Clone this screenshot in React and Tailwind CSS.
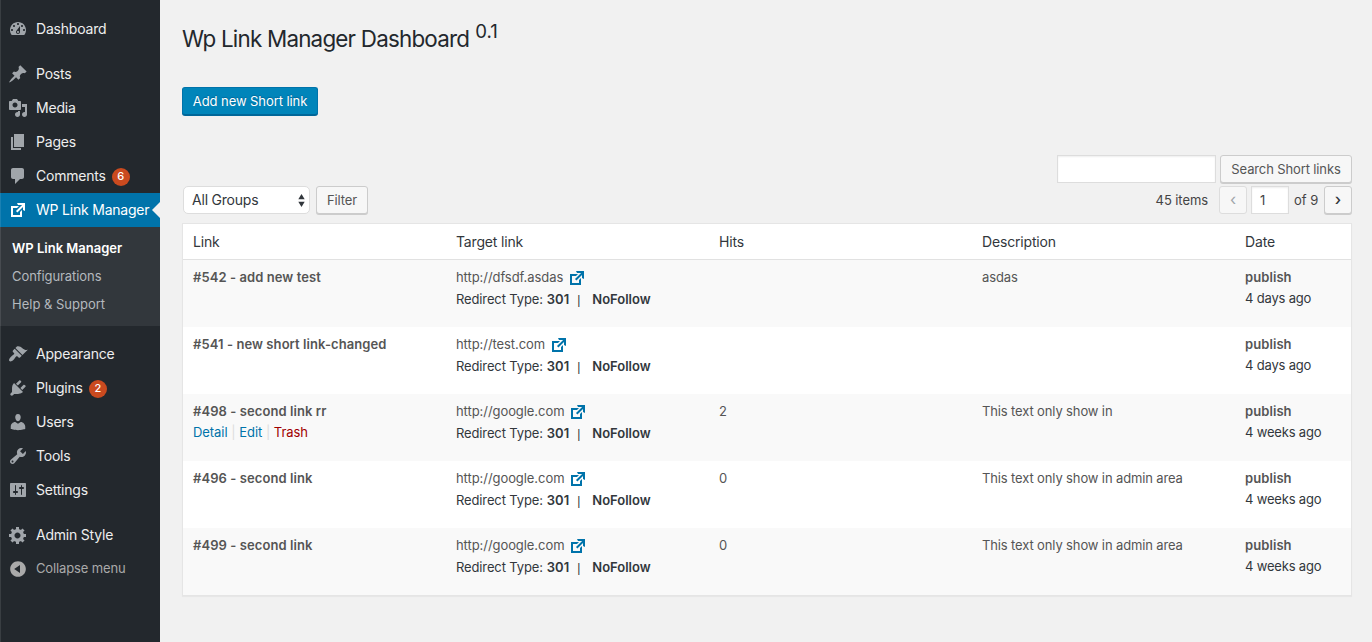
import React from "react";

const ICONS = {
  dashboard:
    "M3.76 16h12.48c1.1-1.37 1.76-3.11 1.76-5 0-4.42-3.58-8-8-8s-8 3.58-8 8c0 1.89.66 3.63 1.76 5zM10 4c.55 0 1 .45 1 1s-.45 1-1 1-1-.45-1-1 .45-1 1-1zM6 6c.55 0 1 .45 1 1s-.45 1-1 1-1-.45-1-1 .45-1 1-1zm8 0c.55 0 1 .45 1 1s-.45 1-1 1-1-.45-1-1 .45-1 1-1zm-5.37 5.55L12 7v6c0 1.1-.9 2-2 2s-2-.9-2-2c0-.57.24-1.08.63-1.45zM4 10c.55 0 1 .45 1 1s-.45 1-1 1-1-.45-1-1 .45-1 1-1zm12 0c.55 0 1 .45 1 1s-.45 1-1 1-1-.45-1-1 .45-1 1-1zm-5 3c0-.55-.45-1-1-1s-1 .45-1 1 .45 1 1 1 1-.45 1-1z",
  post: "M10.44 3.02l1.82-1.82 6.36 6.35-1.83 1.82c-1.05-.68-2.48-.57-3.41.36l-.75.75c-.92.93-1.04 2.35-.35 3.41l-1.83 1.82-2.41-2.41-2.8 2.79c-.42.42-3.38 2.71-3.8 2.29s1.86-3.39 2.28-3.81l2.79-2.79L4.1 9.36l1.83-1.82c1.05.69 2.48.57 3.4-.36l.75-.75c.93-.92 1.05-2.35.36-3.41z",
  media:
    "M13 11V4c0-.55-.45-1-1-1h-1.67L9 1H5L3.67 3H2c-.55 0-1 .45-1 1v7c0 .55.45 1 1 1h10c.55 0 1-.45 1-1zM7 4.5c1.38 0 2.5 1.12 2.5 2.5S8.38 9.5 7 9.5 4.5 8.38 4.5 7 5.62 4.5 7 4.5zM14 6h5v10.5c0 1.38-1.12 2.5-2.5 2.5S14 17.88 14 16.5s1.12-2.5 2.5-2.5c.17 0 .34.02.5.05V9h-3V6zm-4 8.05V13h2v3.5c0 1.38-1.12 2.5-2.5 2.5S7 17.88 7 16.5 8.12 14 9.5 14c.17 0 .34.02.5.05z",
  page: "M6 15V2h10v13H6zm-1 1h8v2H3V5h2v11z",
  comments:
    "M5 2h9c1.1 0 2 .9 2 2v7c0 1.1-.9 2-2 2h-2l-5 5v-5H5c-1.1 0-2-.9-2-2V4c0-1.1.9-2 2-2z",
  external:
    "M9 3h8v8l-2-1V6.92l-5.6 5.59-1.41-1.41L14.08 5H10zm3 12v-3l2-2v7H3V6h8L9 8H5v7h7z",
  appearance:
    "M14.48 11.06L7.41 3.99l1.5-1.5c.5-.56 2.3-.47 3.51.32 1.21.8 1.43 1.28 2.91 2.1 1.18.64 2.45 1.26 4.45.85zm-.71.71L6.7 4.7 4.93 6.47c-.39.39-.39 1.02 0 1.41l1.06 1.06c.39.39.39 1.03 0 1.42-.6.6-1.43 1.11-2.21 1.69-.35.26-.7.53-1.01.84C1.43 14.23.4 16.08 1.4 17.07c.99 1 2.84-.03 4.18-1.36.31-.31.58-.66.85-1.02.57-.78 1.08-1.61 1.69-2.21.39-.39 1.02-.39 1.41 0l1.06 1.06c.39.39 1.02.39 1.41 0z",
  plugins:
    "M13.11 4.36L9.87 7.6 8 5.73l3.24-3.24c.35-.34 1.05-.2 1.56.32.52.51.66 1.21.31 1.55zm-8 1.77l.91-1.12 9.01 9.01-1.19.84c-.71.71-2.63 1.16-3.82 1.16H6.14L4.9 17.26c-.59.59-1.54.59-2.12 0-.59-.58-.59-1.53 0-2.12l1.24-1.24v-3.88c0-1.13.4-3.19 1.09-3.89zm7.26 3.97l3.24-3.24c.34-.35 1.04-.21 1.55.31.52.51.66 1.21.31 1.55l-3.24 3.25z",
  users:
    "M10 9.25c-2.27 0-2.73-3.44-2.73-3.44C7 4.02 7.82 2 9.97 2c2.16 0 2.98 2.02 2.71 3.81 0 0-.41 3.44-2.68 3.44zm0 2.57L12.72 10c2.39 0 4.52 2.33 4.52 4.53v2.49s-3.65 1.13-7.24 1.13c-3.65 0-7.24-1.13-7.24-1.13v-2.49c0-2.25 1.94-4.48 4.47-4.48z",
  tools:
    "M16.68 9.77c-1.34 1.34-3.3 1.67-4.95.99l-5.41 6.52c-.99.99-2.59.99-3.58 0s-.99-2.59 0-3.57l6.52-5.42c-.68-1.65-.35-3.61.99-4.95 1.28-1.28 3.12-1.62 4.72-1.06l-2.89 2.89 2.82 2.82 2.86-2.87c.53 1.58.18 3.39-1.08 4.65zM3.81 16.21c.4.39 1.04.39 1.43 0 .4-.4.4-1.04 0-1.43-.39-.4-1.03-.4-1.43 0-.39.39-.39 1.03 0 1.43z",
  settings:
    "M18 16V4c0-.55-.45-1-1-1H3c-.55 0-1 .45-1 1v12c0 .55.45 1 1 1h14c.55 0 1-.45 1-1zM8 11h1c.55 0 1 .45 1 1s-.45 1-1 1H8v1.5c0 .28-.22.5-.5.5s-.5-.22-.5-.5V13H6c-.55 0-1-.45-1-1s.45-1 1-1h1V5.5c0-.28.22-.5.5-.5s.5.22.5.5V11zm5-2h-1c-.55 0-1-.45-1-1s.45-1 1-1h1V5.5c0-.28.22-.5.5-.5s.5.22.5.5V7h1c.55 0 1 .45 1 1s-.45 1-1 1h-1v5.5c0 .28-.22.5-.5.5s-.5-.22-.5-.5V9z",
  generic:
    "M18 12h-2.18c-.17.7-.44 1.35-.81 1.93l1.54 1.54-2.1 2.1-1.54-1.54c-.58.36-1.23.63-1.91.79V19H8v-2.18c-.68-.16-1.33-.43-1.91-.79l-1.54 1.54-2.12-2.12 1.54-1.54c-.36-.58-.63-1.23-.79-1.91H1V9.03h2.17c.16-.7.44-1.35.8-1.94L2.43 5.55l2.1-2.1 1.54 1.54c.58-.37 1.24-.64 1.93-.81V2h3v2.18c.68.16 1.33.43 1.91.79l1.54-1.54 2.12 2.12-1.54 1.54c.36.59.64 1.24.8 1.94H18V12zm-8.5 1.5c1.66 0 3-1.34 3-3s-1.34-3-3-3-3 1.34-3 3 1.34 3 3 3z",
  collapse:
    "M10 2.16c4.33 0 7.84 3.51 7.84 7.84s-3.51 7.84-7.84 7.84S2.16 14.33 2.16 10 5.71 2.16 10 2.16zm2 11.72V6.12L6.18 9.97z",
};

function Icon({ name, className = "" }) {
  return (
    <svg viewBox="0 0 20 20" fill="currentColor" fillRule="evenodd" className={`size-5 shrink-0 ${className}`}>
      <path d={ICONS[name]} />
    </svg>
  );
}

function MenuItem({ icon, label, badge, active }) {
  return (
    <li className={`relative flex h-[34px] items-center pl-2 text-sm ${active ? "bg-[#0073aa] text-white" : "text-[#eeeeee]"}`}>
      <Icon name={icon} className={active ? "text-white" : "text-[#a0a5aa]"} />
      <span className="ml-2 whitespace-nowrap tracking-[-0.015em]">{label}</span>
      {badge && (
        <span className="mt-0.5 ml-1.5 flex size-[18px] items-center justify-center rounded-full bg-[#ca4a1f] text-[11px] font-medium text-white">
          {badge}
        </span>
      )}
      {active && (
        <span className="absolute top-[9px] right-0 border-y-8 border-r-8 border-y-transparent border-r-[#f1f1f1]" />
      )}
    </li>
  );
}

function Sidebar() {
  return (
    <nav className="relative w-40 shrink-0 bg-[#23282d] pt-3">
      <ul>
        <MenuItem icon="dashboard" label="Dashboard" />
      </ul>
      <ul className="mt-[11px]">
        <MenuItem icon="post" label="Posts" />
        <MenuItem icon="media" label="Media" />
        <MenuItem icon="page" label="Pages" />
        <MenuItem icon="comments" label="Comments" badge="6" />
        <MenuItem icon="external" label="WP Link Manager" active />
      </ul>
      <ul className="h-[99px] bg-[#32373c] pt-[7px] pl-3 text-[13px] leading-7 tracking-[-0.01em] text-[#b4b9be]">
        <li className="font-semibold tracking-normal text-white">WP Link Manager</li>
        <li className="tracking-[-0.006em]">Configurations</li>
        <li className="tracking-normal">Help &amp; Support</li>
      </ul>
      <ul className="mt-[11px]">
        <MenuItem icon="appearance" label="Appearance" />
        <MenuItem icon="plugins" label="Plugins" badge="2" />
        <MenuItem icon="users" label="Users" />
        <MenuItem icon="tools" label="Tools" />
        <MenuItem icon="settings" label="Settings" />
      </ul>
      <ul className="mt-[11px]">
        <MenuItem icon="generic" label="Admin Style" />
        <li className="flex h-[34px] items-center pl-2 text-[13px] text-[#aaaaaa]">
          <Icon name="collapse" />
          <span className="ml-2 tracking-[-0.01em]">Collapse menu</span>
        </li>
      </ul>
      <span className="absolute inset-y-0 left-0 w-px bg-white/10" />
    </nav>
  );
}

const GREY_BUTTON =
  "flex h-7 items-center justify-center rounded-[3px] border border-[#cccccc] bg-[#f7f7f7] text-[13px] tracking-[-0.01em] text-[#555555] shadow-[0_1px_0_#cccccc]";

const ROWS = [
  { title: "#542 - add new test", url: "http://dfsdf.asdas", hits: "", desc: "asdas", date: "4 days ago" },
  { title: "#541 - new short link-changed", url: "http://test.com", hits: "", desc: "", date: "4 days ago" },
  { title: "#498 - second link rr", url: "http://google.com", hits: "2", desc: "This text only show in", date: "4 weeks ago", actions: true },
  { title: "#496 - second link", url: "http://google.com", hits: "0", desc: "This text only show in admin area", date: "4 weeks ago" },
  { title: "#499 - second link", url: "http://google.com", hits: "0", desc: "This text only show in admin area", date: "4 weeks ago" },
];

const GRID = "grid grid-cols-[263px_263px_263px_263px_1fr] *:pl-2.5";

function Row({ row }) {
  return (
    <div className={`${GRID} h-[67px] pt-2 text-[13px] leading-[19.5px] tracking-[-0.01em] text-[#555555] odd:bg-[#f9f9f9]`}>
      <div>
        <div className="font-semibold tracking-[0.006em]">{row.title}</div>
        {row.actions && (
          <div className="mt-[1.5px] flex tracking-[-0.004em] text-[#dddddd]">
            <span className="text-[#0073aa]">Detail</span>
            <span className="px-[3.7px]">|</span>
            <span className="text-[#0073aa]">Edit</span>
            <span className="px-[3.7px]">|</span>
            <span className="text-[#a00000]">Trash</span>
          </div>
        )}
      </div>
      <div>
        <div className="flex h-[21px] items-start tracking-[-0.005em]">
          {row.url}
          <Icon name="external" className="ml-[3.5px] text-[#0073aa]" />
        </div>
        <div className="flex items-baseline leading-[21px] text-[#32373c]">
          <span>Redirect Type:</span>
          <b className="ml-1 font-semibold tracking-normal">301</b>
          <span className="ml-2 font-['Liberation_Sans'] text-xs leading-none tracking-normal">|</span>
          <b className="ml-3 font-semibold tracking-normal">NoFollow</b>
        </div>
      </div>
      <div>{row.hits}</div>
      <div>{row.desc}</div>
      <div>
        <div className="font-semibold tracking-[0.006em]">publish</div>
        <div className="mt-[1.5px] tracking-[-0.014em] text-[#32373c]">{row.date}</div>
      </div>
    </div>
  );
}

export default function App() {
  return (
    <div className="flex h-[642px] w-[1372px] overflow-hidden bg-[#f1f1f1] font-['Inter','Liberation_Sans',sans-serif] text-[#444444]">
      <Sidebar />
      <main className="flex flex-1 flex-col pr-5 pl-[22px]">
        <h1 className="mt-[22px] flex h-[34px] items-center text-[22.4px] tracking-[-0.035em] text-[#23282d]">
          Wp Link Manager Dashboard
          <span className="mb-[15px] ml-1.5 text-[18.6px] tracking-normal">0.1</span>
        </h1>
        <button className="mt-[31px] flex h-7 w-[136px] items-center justify-center rounded-[3px] border border-[#0073aa] border-b-[#006799] bg-[#0085ba] pt-0.5 text-[13px] tracking-[-0.006em] whitespace-nowrap text-white shadow-[0_1px_0_#006799] text-shadow-[0_-1px_1px_#006799]">
          Add new Short link
        </button>
        <div className="mt-10 flex justify-end gap-1">
          <div className="h-7 w-[159px] border border-[#dddddd] bg-white shadow-[inset_0_1px_2px_rgba(0,0,0,0.07)]" />
          <button className={`${GREY_BUTTON} w-[132px] pt-0.5`}>Search Short links</button>
        </div>
        <div className="mt-[3px] flex h-7 items-center">
          <div className="ml-px flex h-7 w-[127px] items-center justify-between rounded-[5px] border border-[#dddddd] bg-white pr-1 pl-2 text-sm tracking-[-0.015em] text-[#32373c]">
            All Groups
            <svg viewBox="0 0 7 13" className="h-[13px] w-[7px]" fill="#32373c">
              <path d="M3.5 0L6.7 5.3H.3zM3.5 13L.3 7.7h6.4z" />
            </svg>
          </div>
          <button className={`${GREY_BUTTON} ml-1.5 w-[52px] pt-0.5`}>Filter</button>
          <span className="mr-[11px] ml-auto pt-0.5 text-[13px] tracking-[-0.006em]">45 items</span>
          <span className="flex h-7 w-7 items-center justify-center rounded-[3px] border border-[#dddddd] bg-[#f7f7f7] pb-0.5 text-base text-[#a0a5aa]">
            ‹
          </span>
          <span className="ml-1 flex h-7 w-[38px] items-center border border-[#dddddd] bg-white pt-0.5 pl-2 text-[13px] shadow-[inset_0_1px_2px_rgba(0,0,0,0.07)]">
            1
          </span>
          <span className="w-[35px] pt-0.5 pl-[5px] text-[13px] whitespace-nowrap">of 9</span>
          <span className={`${GREY_BUTTON} w-7 pb-0.5`}>
            <span className="text-base font-medium text-[#32373c]">›</span>
          </span>
        </div>
        <div className="mt-[9px] h-[373px] border border-[#e5e5e5] bg-white shadow-[0_1px_1px_rgba(0,0,0,0.04)]">
          <div className={`${GRID} h-9 items-center border-b border-[#e1e1e1] text-sm tracking-[-0.012em] text-[#32373c]`}>
            <span>Link</span>
            <span>Target link</span>
            <span>Hits</span>
            <span>Description</span>
            <span>Date</span>
          </div>
          <div>
            {ROWS.map((row) => (
              <Row key={row.title} row={row} />
            ))}
          </div>
        </div>
      </main>
    </div>
  );
}
